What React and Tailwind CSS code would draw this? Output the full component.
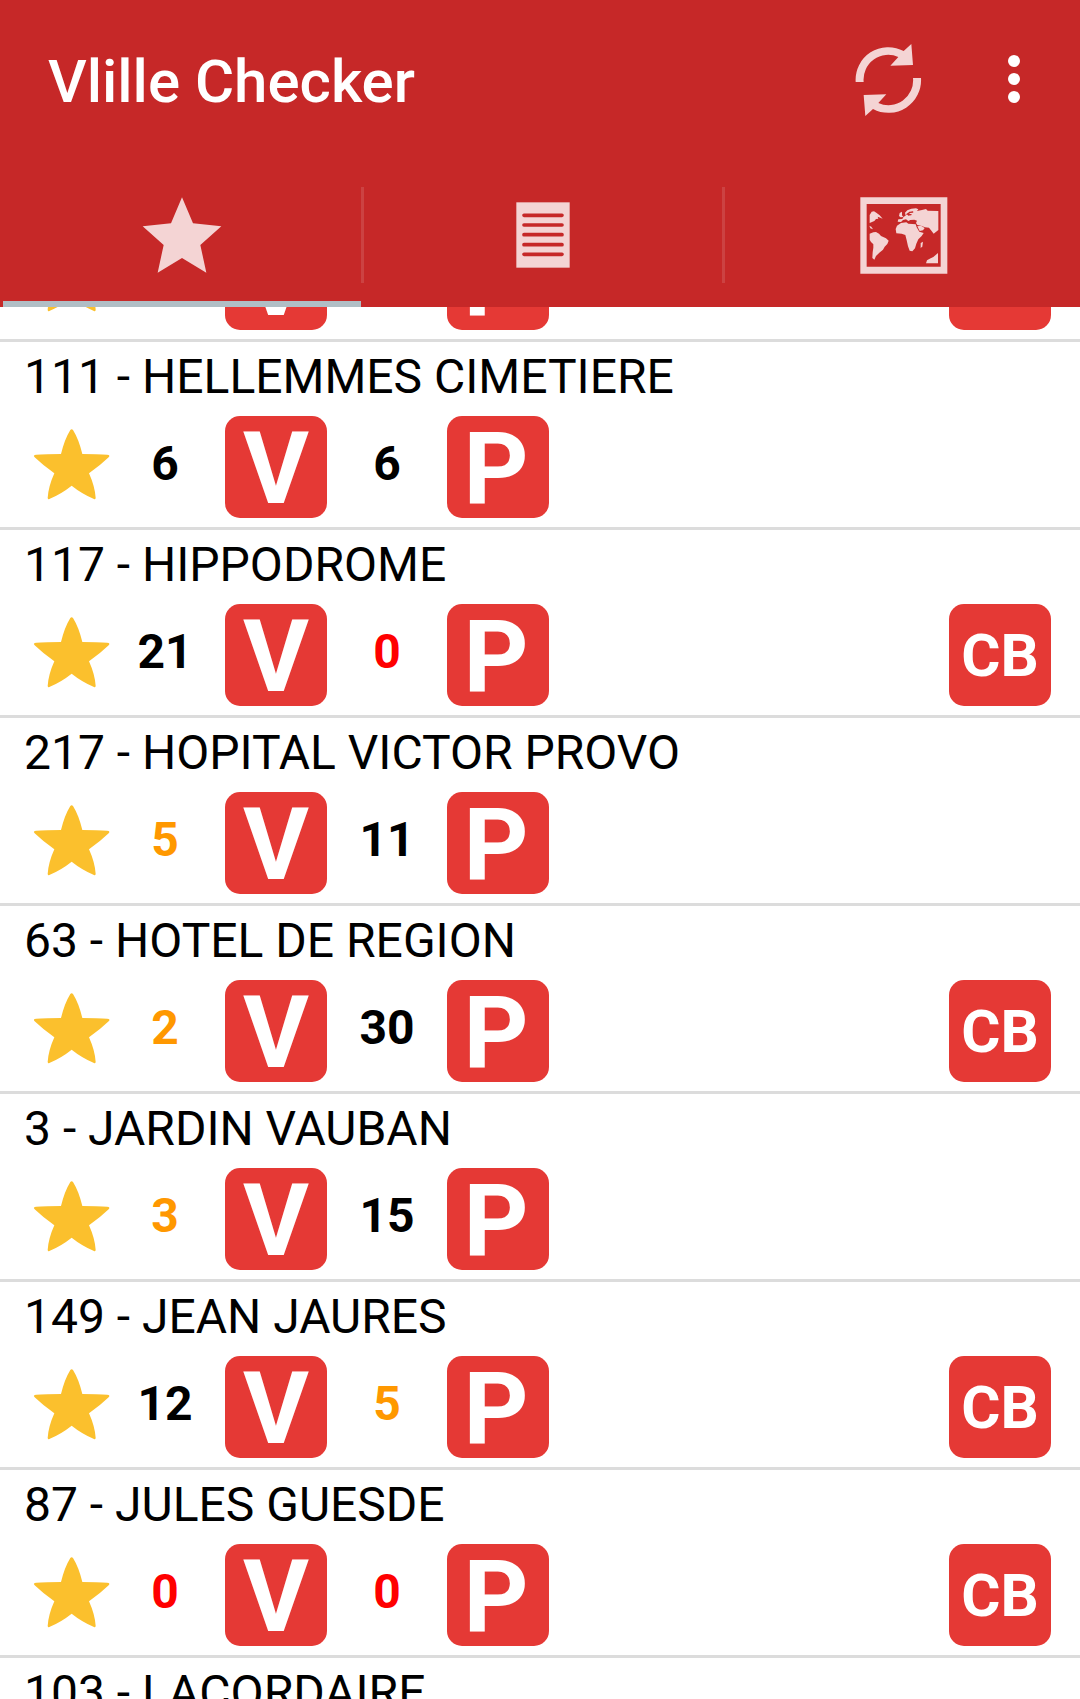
import React from "react";

const stations = [
  { id: "previous", bikes: "", docks: "", card: true },
  { id: "111", name: "HELLEMMES CIMETIERE", bikes: 6, docks: 6 },
  { id: "117", name: "HIPPODROME", bikes: 21, docks: 0, card: true },
  { id: "217", name: "HOPITAL VICTOR PROVO", bikes: 5, docks: 11 },
  { id: "63", name: "HOTEL DE REGION", bikes: 2, docks: 30, card: true },
  { id: "3", name: "JARDIN VAUBAN", bikes: 3, docks: 15 },
  { id: "149", name: "JEAN JAURES", bikes: 12, docks: 5, card: true },
  { id: "87", name: "JULES GUESDE", bikes: 0, docks: 0, card: true },
  { id: "103", name: "LACORDAIRE", bikes: "", docks: "" },
];

function countColor(n) {
  if (n === 0) return "text-[#ff0000]";
  if (n <= 5) return "text-[#ff9800]";
  return "text-black";
}

function RefreshIcon() {
  const arrow =
    "M77 186H101A74 74 0 0 1 205 111L181 137L249 135L244 72L221 93A98 98 0 0 0 77 186Z";
  return (
    <svg viewBox="66 66 216 228" className="h-[76px] w-[72px]" fill="#f4d4d4" aria-hidden="true">
      <path d={arrow} />
      <path d={arrow} transform="rotate(180 175 180)" />
    </svg>
  );
}

function MoreIcon() {
  return (
    <svg viewBox="0 0 48 48" className="size-12" fill="#fff" aria-hidden="true">
      <circle cx="24" cy="6" r="6" />
      <circle cx="24" cy="24" r="6" />
      <circle cx="24" cy="42" r="6" />
    </svg>
  );
}

function TabStarIcon() {
  return (
    <svg viewBox="420 75 252 240" className="h-20 w-[84px]" fill="#f4d4d4" aria-hidden="true">
      <path d="M546 82L579 160L664 169L601 225L619 308L546 264L473 308L491 225L428 169L513 160Z" />
    </svg>
  );
}

function ListIcon() {
  return (
    <svg viewBox="78 66 162 198" className="h-[66px] w-[54px]" aria-hidden="true">
      <rect x="79" y="67" width="160" height="196" fill="#f4d4d4" />
      <path
        d="M102 106H216M102 135H216M102 164H216M102 194H216M102 223H216"
        stroke="#c62828"
        strokeWidth="11"
        strokeLinecap="round"
      />
    </svg>
  );
}

function MapIcon() {
  return (
    <svg viewBox="61 50 264 231" className="h-[77px] w-[88px]" fill="#f4d4d4" aria-hidden="true">
      <path fillRule="evenodd" d="M62 51H323V280H62ZM81 71V259H303V71Z" />
      <path d="M90 104L96 94L103 93L111 98L120 105L129 115L122 112L114 109L116 115L109 116L104 122L90 128Z" />
      <path d="M89 136L95 139L100 147L92 144Z" />
      <path d="M90 160L101 156L109 155L118 160L124 167L139 174L147 181L143 191L135 199L130 208L119 217L109 227L104 238L98 233L99 216L101 202L101 192L94 185L90 178Z" />
      <path d="M180 98L187 94L187 105L191 110L183 111L178 107Z" />
      <path d="M174 124L176 117L188 116L192 109L198 106L196 97L203 90L215 85L229 84L236 87L232 92L247 89L259 86L264 91L296 92V149L282 160L274 150L268 142L256 141L244 136L233 134L229 128L232 121L224 118L212 119L206 122L199 117L190 119L184 125Z" />
      <path d="M168 146L172 136L184 128L200 126L206 130L218 131L228 132L231 141L239 154L252 158L246 167L236 177L230 190L226 204L218 213L210 211L205 198L201 180L197 164L186 160L170 159Z" />
      <path d="M233 138L244 136L255 143L250 150L240 152Z" />
      <path d="M243 188L250 184L248 198L243 204Z" />
      <path d="M295 218V249H259L262 240L273 234L281 230Z" />
      <path
        d="M202 102L208 98L207 104L214 103M211 96L219 95"
        fill="none"
        stroke="#c62828"
        strokeWidth="4"
        strokeLinecap="round"
      />
    </svg>
  );
}

function FavoriteStar() {
  return (
    <svg viewBox="72 228 288 306" className="h-[102px] w-24" fill="#fbc02d" aria-hidden="true">
      <path d="M211 270Q215 265 219 270Q236 297 247 342Q310 342 326 345Q331 348 326 352Q300 377 267 400Q285 440 287 474Q286 479 282 477Q245 461 215 437Q185 461 148 477Q144 479 143 474Q145 440 163 400Q130 377 104 352Q99 348 104 345Q120 342 183 342Q194 297 211 270Z" />
    </svg>
  );
}

const badgeText = {
  V: "pt-1 text-[101px] leading-[98px]",
  P: "pt-1 pr-1 text-[101px] leading-[98px]",
  CB: "pt-0.5 text-[60px] leading-[60px]",
};

function Badge({ label }) {
  return (
    <span
      className={
        "flex size-[102px] shrink-0 items-center justify-center rounded-[15px] bg-[#e53935] font-bold text-white " +
        badgeText[label]
      }
    >
      {label}
    </span>
  );
}

function Count({ value }) {
  return (
    <span className={"w-[90px] pb-1.5 text-center text-[48px] leading-14 font-bold " + countColor(value)}>
      {value}
    </span>
  );
}

function StationRow({ station }) {
  return (
    <li className="border-b-[3px] border-[#dcdcdc] pt-[7px] pb-[9px]">
      <h2 className="h-14 truncate px-6 text-[48px] leading-14 font-normal text-black">
        {station.name ? `${station.id} - ${station.name}` : null}
      </h2>
      <div className="mt-[11px] flex items-center pr-[29px] pl-6">
        <button type="button" aria-label="Toggle favourite">
          <FavoriteStar />
        </button>
        <div className="flex items-center gap-[15px]">
          <Count value={station.bikes} />
          <Badge label="V" />
          <Count value={station.docks} />
          <Badge label="P" />
        </div>
        {station.card && (
          <div className="ml-auto">
            <Badge label="CB" />
          </div>
        )}
      </div>
    </li>
  );
}

function Tab({ label, selected, divided, children }) {
  return (
    <>
      {divided && <span className="my-6 w-[3px] shrink-0 bg-[#cc4242]" />}
      <button
        type="button"
        role="tab"
        aria-label={label}
        aria-selected={selected}
        className={
          "flex flex-1 items-center justify-center border-b-[6px] pt-1.5 " +
          (selected ? "border-[#b0bec5]" : "border-transparent")
        }
      >
        {children}
      </button>
    </>
  );
}

export default function App() {
  return (
    <div className="flex h-screen flex-col overflow-hidden bg-white font-[Roboto,sans-serif]">
      <header className="shrink-0 overflow-hidden bg-[#c62828]">
        <div className="flex h-[163px] items-center pr-[42px] pl-12">
          <h1 className="flex-1 text-[60px] leading-[70px] font-medium text-white">Vlille Checker</h1>
          <button type="button" aria-label="Refresh" className="mr-[66px] pb-1">
            <RefreshIcon />
          </button>
          <button type="button" aria-label="More options" className="pb-1.5">
            <MoreIcon />
          </button>
        </div>
        <div role="tablist" className="-mr-[3px] flex h-36 pl-[3px]">
          <Tab label="Favourites" selected>
            <TabStarIcon />
          </Tab>
          <Tab label="All stations" selected={false} divided>
            <ListIcon />
          </Tab>
          <Tab label="Map" selected={false} divided>
            <MapIcon />
          </Tab>
        </div>
      </header>
      <main className="min-h-0 flex-1 overflow-hidden">
        <ul className="-mt-[153px]">
          {stations.map((s) => (
            <StationRow key={s.id} station={s} />
          ))}
        </ul>
      </main>
    </div>
  );
}
